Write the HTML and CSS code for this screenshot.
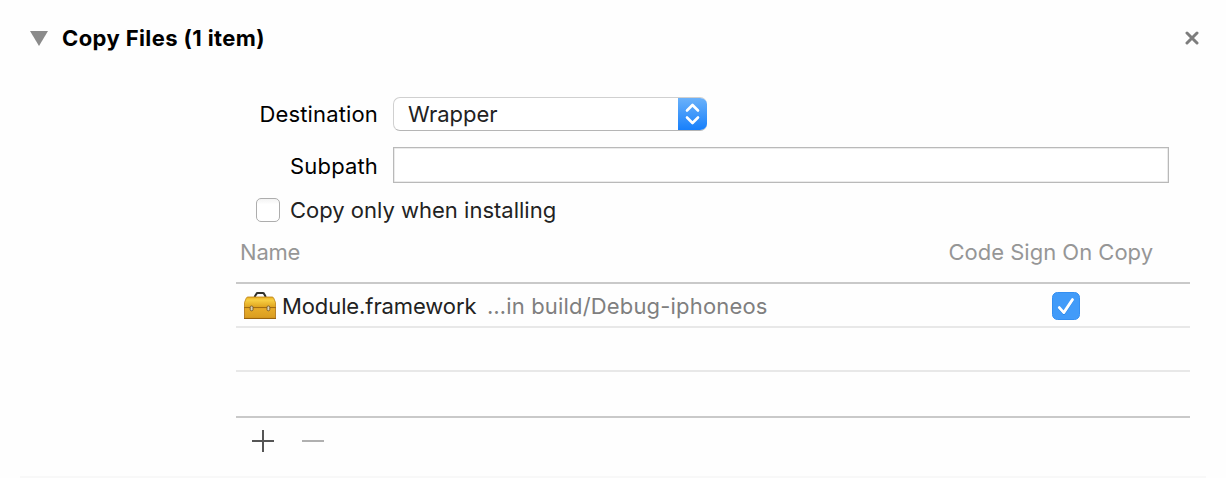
FILE: index.html
```html
<!DOCTYPE html>
<html lang="en">
<head>
<meta charset="utf-8">
<title>Copy Files</title>
<link rel="stylesheet" href="styles.css">
</head>
<body>
<section class="phase">
  <header class="phase-header">
    <svg class="disclosure" width="18" height="15" viewBox="0 0 18 15"><path d="M0 0H18L9 15Z" fill="#8b8b8b"/></svg>
    <h1 class="title">Copy Files (1 item)</h1>
    <svg class="close" width="14" height="14" viewBox="0 0 14 14"><path d="M2 2L12 12M12 2L2 12" stroke="#7d7d7d" stroke-width="3" stroke-linecap="round"/></svg>
  </header>
  <div class="form">
    <div class="field field-destination">
      <span class="label">Destination</span>
      <div class="select"><span>Wrapper</span>
        <span class="stepper"><svg width="29" height="34" viewBox="0 0 29 34" fill="none" stroke="#fff" stroke-width="2.6" stroke-linecap="round" stroke-linejoin="round"><path d="M9 13.5L14.5 8L20 13.5M9 20.5L14.5 26L20 20.5"/></svg></span>
      </div>
    </div>
    <div class="field field-subpath">
      <span class="label">Subpath</span>
      <div class="input"></div>
    </div>
    <div class="option"><span class="checkbox"></span><span>Copy only when installing</span></div>
  </div>
  <div class="table">
    <div class="thead"><span class="name">Name</span><span>Code Sign On Copy</span></div>
    <div class="row row-item">
      <svg class="toolbox" width="32" height="28" viewBox="0 0 32 28">
        <defs><linearGradient id="lid" x2="0" y2="1"><stop offset="0" stop-color="#e9b021"/><stop offset=".3" stop-color="#f8cf43"/><stop offset="1" stop-color="#dda11c"/></linearGradient>
        <linearGradient id="box" x2="0" y2="1"><stop offset="0" stop-color="#e9ad2a"/><stop offset="1" stop-color="#d99c20"/></linearGradient></defs>
        <path d="M10.5 5L12.3 2Q12.7 1.1 13.7 1.1H18.8Q19.8 1.1 20.2 2L21.8 5" fill="none" stroke="#30302b" stroke-width="2"/>
        <path d="M.5 15.6V10.5L2.3 6Q2.8 5 4 5H28Q29.2 5 29.7 6L31.5 10.5V15.6Z" fill="url(#lid)" stroke="#bd8114" stroke-width=".8"/>
        <path d="M.5 15.6H31.5V26.4H.5Z" fill="url(#box)" stroke="#a96d10" stroke-width=".8"/>
        <path d="M0 15.5H32" stroke="#a36c12"/><path d="M0 26.5H32" stroke="#9a630e"/>
        <rect x="6.2" y="14" width="2.8" height="4.8" rx="1.3" fill="#d8d3bd" stroke="#765725" stroke-width=".9"/>
        <rect x="23" y="14" width="2.8" height="4.8" rx="1.3" fill="#d8d3bd" stroke="#765725" stroke-width=".9"/>
      </svg>
      <span class="file">Module.framework</span>
      <span class="path">…in build/Debug-iphoneos</span>
      <svg class="checked" width="28" height="28" viewBox="0 0 28 28"><rect x=".5" y=".5" width="27" height="27" rx="5" fill="#419bf9" stroke="#348ff1"/><path d="M7.5 16.6L12 21.6L20.5 8.6" fill="none" stroke="#2382e4" stroke-width="2.5" stroke-linecap="round" stroke-linejoin="round"/><path d="M7.3 15.6L11.8 20.6L20.5 7.6" fill="none" stroke="#fff" stroke-width="2.8" stroke-linecap="round" stroke-linejoin="round"/></svg>
    </div>
    <div class="row"></div>
    <div class="row row-last"></div>
  </div>
  <footer class="actions">
    <svg width="22" height="22" viewBox="0 0 22 22"><path d="M0 11H22M11 0V22" stroke="#555" stroke-width="2"/></svg>
    <svg width="22" height="22" viewBox="0 0 22 22"><path d="M0 11H22" stroke="#b0b0b0" stroke-width="2"/></svg>
  </footer>
</section>
</body>
</html>
```
FILE: styles.css
```css
* { box-sizing: border-box; }
body { margin: 0; background: #fefefe; font: 22px/26px Inter, "Liberation Sans", sans-serif; color: #000; }
svg { display: block; flex: none; }
span { white-space: nowrap; }
.phase { height: 478px; margin: 0 20px; border-bottom: 2px solid #f8f8f8; }
.phase-header { display: flex; align-items: center; height: 76px; padding: 0 7px 0 10px; }
.disclosure { margin-right: 14px; }
.title { margin: 0; font-size: 22px; line-height: 26px; font-weight: 700; letter-spacing: .4px; }
.close { margin-left: auto; }
.form { padding: 21px 37px 0 216px; }
.field { display: flex; align-items: center; }
.label { width: 142px; margin-right: 15px; text-align: right; letter-spacing: .15px; }
.field-destination { height: 34px; margin-bottom: 16px; }
.field-subpath { height: 36px; }
.field-subpath .label { padding-top: 2px; }
.select { display: flex; align-items: center; width: 314px; height: 34px; padding-left: 14px; border: 1px solid #d0d0d0; border-bottom-color: #b5b5b5; border-radius: 7px; background: #fff; color: #222; overflow: hidden; border-right: 0; }
.stepper { margin: -1px 0 -1px auto; background: linear-gradient(#6db3fa, #157efb); }
.input { flex: 1; height: 36px; border: 1px solid #b9b9b9; background: #fff; box-shadow: inset 0 0 0 .5px #d8d8d8; }
.option { display: flex; align-items: center; height: 26px; margin-top: 14px; padding-left: 20px; color: #222; }
.checkbox { width: 24px; height: 24px; margin-right: 10px; border: 1px solid #adadad; border-radius: 5px; background: linear-gradient(#f3f3f3, #fff 25%); }
.table { margin: 8px 16px 0 216px; }
.thead { display: flex; justify-content: space-between; height: 53px; padding: 8px 37px 0 4px; border-bottom: 2px solid #c9c9c9; color: #969696; }
.name { letter-spacing: -.2px; }
.row { display: flex; align-items: center; height: 44px; padding-left: 8px; border-bottom: 2px solid #e8e8e8; color: #222; }
.row-item { padding-top: 2px; }
.row-last { height: 46px; border-color: #c9c9c9; }
.toolbox { margin-right: 6px; }
.file { width: 205px; letter-spacing: -.1px; }
.path { color: #7f7f7f; letter-spacing: .17px; }
.checked { margin: 0 110px 0 auto; }
.actions { display: flex; gap: 28px; padding: 12px 0 0 232px; }
```
